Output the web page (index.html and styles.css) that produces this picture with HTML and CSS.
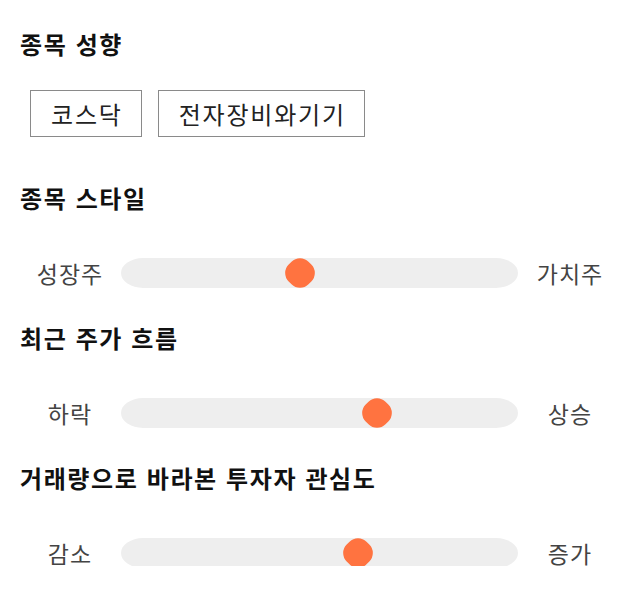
FILE: index.html
```html
<!DOCTYPE html>
<html lang="ko">
<head>
<meta charset="utf-8">
<link rel="stylesheet" href="styles.css">
</head>
<body>
<div class="page">
  <section class="group group-chips">
    <h2 class="title">종목 성향</h2>
    <div class="chips">
      <span class="chip">코스닥</span>
      <span class="chip">전자장비와기기</span>
    </div>
  </section>
  <section class="group">
    <h2 class="title">종목 스타일</h2>
    <div class="slider-row">
      <span class="label">성장주</span>
      <div class="track"><span class="thumb" style="left:45.2%"></span></div>
      <span class="label">가치주</span>
    </div>
  </section>
  <section class="group">
    <h2 class="title">최근 주가 흐름</h2>
    <div class="slider-row">
      <span class="label">하락</span>
      <div class="track"><span class="thumb" style="left:64.4%"></span></div>
      <span class="label">상승</span>
    </div>
  </section>
  <section class="group">
    <h2 class="title">거래량으로 바라본 투자자 관심도</h2>
    <div class="slider-row">
      <span class="label">감소</span>
      <div class="track"><span class="thumb" style="left:59.8%"></span></div>
      <span class="label">증가</span>
    </div>
  </section>
</div>
</body>
</html>
```
FILE: styles.css
```css
* { box-sizing: border-box; }
html, body { margin: 0; padding: 0; background: #fff; }
body {
  font-family: "Noto Sans CJK KR", "Noto Sans", sans-serif;
  color: #111;
}
.page {
  padding: 28px 20px 0 20px;
  display: flex;
  flex-direction: column;
  gap: 36px;
}
.group-chips { margin-bottom: 9px; }
.title {
  margin: 0;
  font-size: 24px;
  font-weight: 700;
  line-height: 32px;
  letter-spacing: 1.6px;
  color: #111;
}
.chips {
  display: flex;
  gap: 16px;
  margin-top: 30px;
  padding-left: 10px;
}
.chip {
  border: 1px solid #8a8a8a;
  padding: 0 18px 0 20px;
  height: 47px;
  line-height: 45px;
  font-size: 24px;
  letter-spacing: 1.8px;
  color: #222;
}
.slider-row {
  display: grid;
  grid-template-columns: 100px 1fr 100px;
  align-items: center;
  margin-top: 42px;
  height: 30px;
}
.label {
  text-align: center;
  font-size: 23px;
  letter-spacing: 1px;
  color: #444;
}
.track {
  position: relative;
  height: 30px;
  margin: 0 2px 0 1px;
  background: #eeeeee;
  border-radius: 22px / 15px;
}
.thumb {
  position: absolute;
  top: 1px;
  width: 28px;
  height: 28px;
  margin-left: -14px;
  background: #ff7340;
  border-radius: 12px;
  transform: rotate(45deg);
}
```
